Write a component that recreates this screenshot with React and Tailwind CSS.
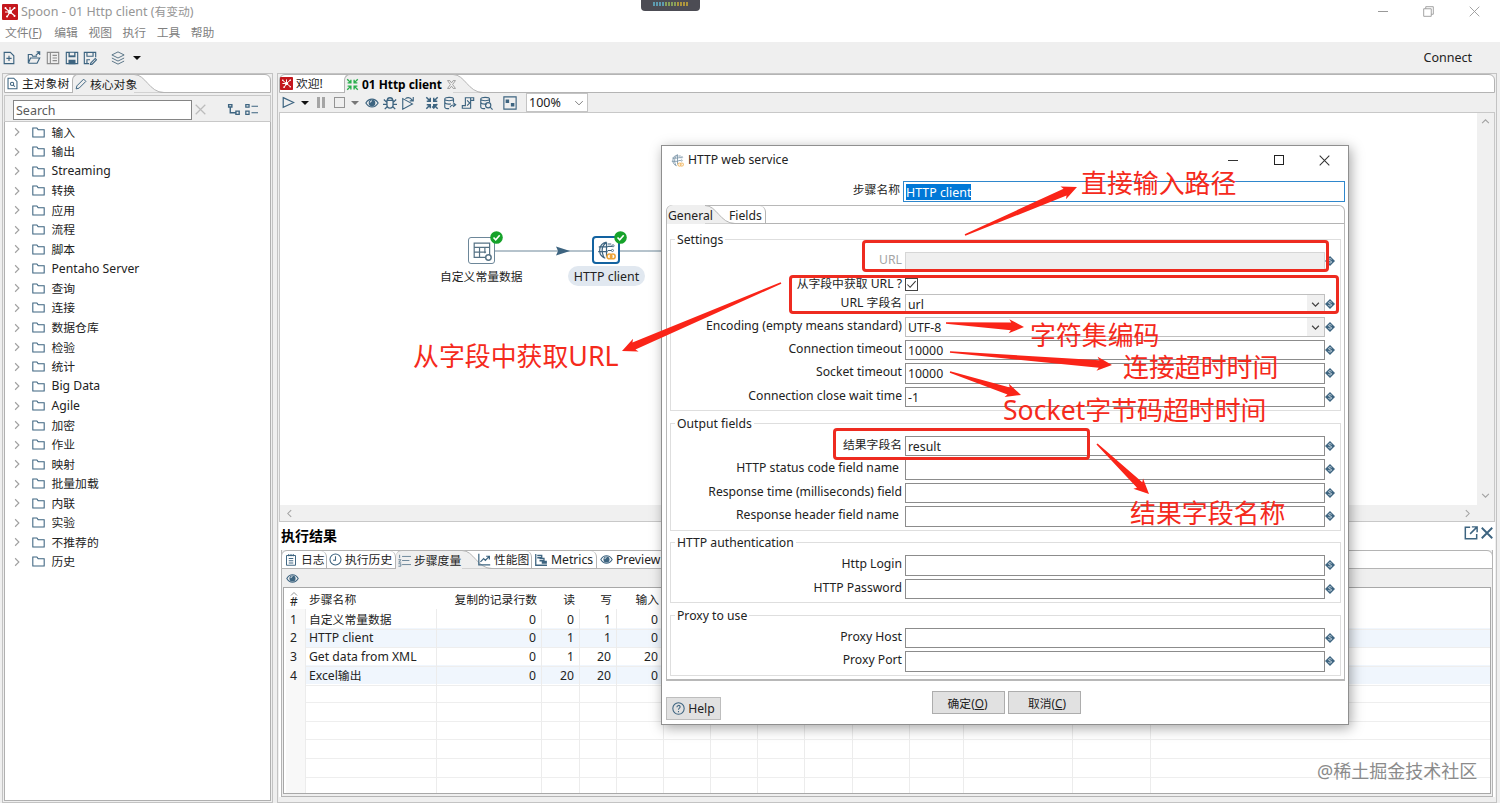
import * as React from "react"
import clsx from "clsx"

const TREE = [
    "输入", "输出", "Streaming", "转换", "应用", "流程", "脚本", "Pentaho Server",
    "查询", "连接", "数据仓库", "检验", "统计", "Big Data", "Agile", "加密",
    "作业", "映射", "批量加载", "内联", "实验", "不推荐的", "历史",
]

const ROWS = [
    ["1", "自定义常量数据", "0", "0", "1", "0"],
    ["2", "HTTP client", "0", "1", "1", "0"],
    ["3", "Get data from XML", "0", "1", "20", "20"],
    ["4", "Excel输出", "0", "20", "20", "0"],
    [], [], [], [], [], [],
]

const COLS = "grid grid-cols-[20px_131px_105px_38px_37px_47px_47px_47px_47px_48px_57px_54px_109px_78px_1fr]"

const ARROWS = [
    [965, 235, 1077, 187],
    [781, 283, 622, 351],
    [946, 323, 1024, 327],
    [950, 352, 1112, 365],
    [950, 372, 1021, 395],
    [1097, 444, 1149, 494],
]

const isLatin = (s) => /^[\x00-\x7f]*$/.test(s)

// Latin and Chinese runs are sized separately so that both sit on the same scale
const Txt = ({ children, className }) => (
    <span className={clsx("whitespace-pre", className)}>
        {children.split(/([\u3000-\u9fff]+)/).filter(Boolean).map((part, i) => (
            <span key={i} className={isLatin(part) ? "text-[12.2px]" : "text-[11.8px]"}>{part}</span>
        ))}
    </span>
)

const Svg = ({ children, size = 15, className, color = "#3d6480" }) => (
    <svg width={size} height={size} viewBox="0 0 16 16" fill="none" stroke={color} strokeWidth="1.3" className={clsx("shrink-0", className)}>
        {children}
    </svg>
)

const Logo = ({ size = 15 }) => (
    <Svg size={size} color="#fff">
        <rect width="16" height="16" rx="1" fill="#c4161c" stroke="none" />
        <path d="M3 4l5 4 5-4.500M8 8l5 4M8 8l-3 5M8 8H3M8 8V3" strokeWidth="1.2" />
        <circle cx="8" cy="8" r="2" fill="#fff" stroke="none" />
        <circle cx="3.500" cy="4" r="1" fill="#fff" stroke="none" />
        <circle cx="12.500" cy="4" r="1" fill="#fff" stroke="none" />
        <circle cx="12.500" cy="12" r="1" fill="#fff" stroke="none" />
        <circle cx="5" cy="12.500" r="1" fill="#fff" stroke="none" />
    </Svg>
)

const Eye = ({ size = 14 }) => (
    <Svg size={size}>
        <path d="M1 8c3.500-6 10.500-6 14 0-3.500 6-10.500 6-14 0z" />
        <circle cx="8" cy="8" r="3.800" fill="#3d6480" stroke="none" />
        <path d="M6 7.500a2 2 0 0 1 2-2" stroke="#fff" strokeWidth="1" />
    </Svg>
)

const Hop = ({ color, size = 14, children }) => (
    <Svg size={size} color={color}>
        <path d="M1.500 1.500L6 6M2 6h4V2M14.500 1.500L10 6M10 2v4h4M1.500 14.500L6 10M2 10h4v4M14.500 14.500L10 10M14 10h-4v4" strokeWidth="1.700" />
        {children}
    </Svg>
)

const Database = () => <path d="M2 3.500C2 1 12 1 12 3.500S2 6 2 3.500v9C2 14 5 14.500 7 14.500M2 7.500c1 1.500 5 1.800 7 1.500M12 3.500V7" />

const Chevron = ({ dir = "right", color = "#a0a0a0", size = 10, width = 1.8 }) => {
    const paths = { right: "M5 2l6 6-6 6", left: "M11 2L5 8l6 6", up: "M2 11l6-6 6 6", down: "M2 5l6 6 6-6" }
    return (
        <Svg size={size} color={color}>
            <path d={paths[dir]} strokeWidth={width} />
        </Svg>
    )
}

const Caret = ({ color = "#111" }) => (
    <svg width="8" height="4" viewBox="0 0 8 4" className="shrink-0">
        <path d="M0 0h8L4 4z" fill={color} />
    </svg>
)

// Slanted right edge of the selected tab
const TabCurve = () => (
    <svg width="30" height="19" viewBox="0 0 30 19" className="shrink-0">
        <path d="M0 0.500C12 0.500 15 18.500 29 18.500H0z" fill="#efefef" />
        <path d="M0 0.500C12 0.500 15 18.500 30 18.500" fill="none" stroke="#b4b4b4" />
    </svg>
)

const TitleBar = () => (
    <div className="relative flex h-[23px] items-center bg-white pl-[2px]">
        <Logo size={16} />
        <span className="ml-[3px] whitespace-pre text-[12.5px] text-[#969696]">Spoon - 01 Http client (<span className="text-[11.8px]">有变动</span>)</span>
        <div className="ml-auto flex w-[122px] items-center justify-between pr-[20px]">
            <div className="h-px w-[10px] bg-[#999]" />
            <Svg size={11} color="#999"><path d="M1 4h11v11H1zM4 4V1h11v11h-3" strokeWidth="1.300" /></Svg>
            <Svg size={11} color="#999"><path d="M1 1l14 14M15 1L1 15" /></Svg>
        </div>
        <div className="absolute left-[641px] top-0 flex h-[11px] w-[59px] justify-center gap-px rounded-b bg-[#4c4c54] pt-[2px]">
            {Array.from({ length: 12 }, (_, i) => (
                <div key={i} className={clsx("h-[4px] w-[2px]", i < 4 ? "bg-[#5d9bb0]" : i < 8 ? "bg-[#87a05b]" : "bg-[#ae963d]")} />
            ))}
        </div>
    </div>
)

const MenuBar = () => (
    <div className="flex h-[19px] items-center gap-[10.5px] bg-white pl-[5px] text-[11.8px] leading-none text-[#808080]">
        <span className="mr-[2px]">文件(<u>F</u>)</span>
        <span>编辑</span>
        <span>视图</span>
        <span>执行</span>
        <span>工具</span>
        <span>帮助</span>
    </div>
)

const Toolbar = () => (
    <div className="flex h-[31px] items-center pl-[2px]">
        <Svg size={14}><path d="M2.500 1.500h7l4 4v9h-11zM8 5.500v6M5 8.500h6" /></Svg>
        <Svg size={14} className="ml-[11px]"><path d="M1.500 14V4h4l1 2h5M1.500 14h10l3-6H4l-2.500 6M10 5l4.500-4M11 1h3.500v3.500" /></Svg>
        <Svg size={14} className="ml-[5px]" color="#8d8d8d"><path d="M1.500 1.500h13v13h-13zM5 1.500v13M7.500 5h5M7.500 8h5M7.500 11h5" /></Svg>
        <Svg size={14} className="ml-[5px]"><path d="M1.500 1.500h13v13h-13z" /><path d="M4 2h8v5H4zM4 10h8v5H4z" fill="#3d6480" stroke="none" /><path d="M5.500 2h5v3h-5z" fill="#efefef" stroke="none" /></Svg>
        <Svg size={14} className="ml-[4px]"><path d="M7 14.500H1.500v-13h13V7M4.500 2v4h7V2M4.500 14v-4H8M9 13.500l5-5 1.500 1.500-5 5-2 .5z" /></Svg>
        <Svg size={14} className="ml-[14px]" color="#557184"><path d="M1 4.500L8 1l7 3.500L8 8zM1 8l7 3.500L15 8M1 11.500L8 15l7-3.500" strokeWidth="1.100" /></Svg>
        <div className="ml-[8px]"><Caret /></div>
        <span className="ml-auto pr-[28px] text-[12.5px]">Connect</span>
    </div>
)

const SidePanel = () => (
    <div className="ml-[2px] flex h-[730px] w-[271px] shrink-0 flex-col border border-[#c3c3c3] bg-[#efefef] px-px pb-px">
        <div className="flex h-[19px] shrink-0 rounded-t-[6px] border border-[#b4b4b4] bg-white">
            <div className="flex w-[67px] items-center gap-[3px] pl-px">
                <Svg size={13}><path d="M2.500 1.500h7l4 4v9h-11z" /><circle cx="7.500" cy="8.500" r="2" /><path d="M9 10l2 2" /></Svg>
                <Txt>主对象树</Txt>
            </div>
            <div className="-mt-px flex h-[19px] w-[62px] items-center gap-[3px] rounded-tl-[6px] border-l border-t border-[#b4b4b4] bg-[#efefef] pl-[2px]">
                <Svg size={12}><path d="M1.500 14.500l1-4 9-9 3 3-9 9z" /></Svg>
                <Txt className="z-10">核心对象</Txt>
            </div>
            <div className="-mt-px"><TabCurve /></div>
        </div>
        <div className="mt-[2px] flex h-[27px] shrink-0 items-center border-x border-b border-t border-[#c8c8c8] pl-[8px] pt-[2px]">
            <div className="flex h-[20px] w-[179px] items-center border border-[#858585] bg-white pl-[2px]"><span className="pt-[2px] text-[12.5px] text-[#5a5a5a]">Search</span></div>
            <Svg size={11} color="#bcbcbc" className="ml-[3px]"><path d="M1 1l14 14M15 1L1 15" strokeWidth="1.800" /></Svg>
            <Svg size={13} className="ml-[21px]"><path d="M2 2h4v3H2zM11 10h4v4h-4zM4 5v7h7" strokeWidth="1.700" /></Svg>
            <Svg size={13} className="ml-[5px]"><path d="M1 2h4v3H1zM1 10h4v4H1zM8 4h8M8 12h8" strokeWidth="1.500" /></Svg>
        </div>
        <div className="grow border-x border-b border-[#b0b0b0] bg-white pt-[0.6px]">
            {TREE.map((name) => (
                <div key={name} className="flex h-[19.53px] items-center pl-[7px]">
                    <Chevron />
                    <Svg size={13} className="ml-[10px]"><path d="M1 2.500h5l1.500 2H15v9H1z" /></Svg>
                    <Txt className="ml-[6.5px]">{name}</Txt>
                </div>
            ))}
        </div>
    </div>
)

const CanvasToolbar = () => (
    <div className="flex h-[19px] shrink-0 items-center pl-[3px]">
        <Svg size={13}><path d="M1.500 2l13 6-13 6z" strokeWidth="1.500" /></Svg>
        <div className="ml-[6px]"><Caret /></div>
        <div className="ml-[8px] h-[11px] w-[3px] bg-[#a5a5a5]" />
        <div className="ml-[2px] h-[11px] w-[3px] bg-[#a5a5a5]" />
        <div className="ml-[9px] h-[11px] w-[11px] border border-[#949494]" />
        <div className="ml-[6px]"><Caret color="#777" /></div>
        <div className="ml-[6px] flex items-center gap-[4px]">
            <Eye size={14} />
            <Svg size={14}><path d="M4.500 5h7v5c0 5-7 5-7 0zM5 5c0-4 6-4 6 0M4 7L1 4M12 7l3-3M4.500 9.500H0M11.500 9.500H16M5 12l-3 3M11 12l3 3" strokeWidth="1.500" /></Svg>
            <Svg size={14}><path d="M2 15V3l11 6zM5 3c3-2 6-1 8 2M10 5.500h4V1" strokeWidth="1.300" /></Svg>
        </div>
        <div className="ml-[10px] flex items-center gap-[4px]">
            <Hop size={14} color="#3d6480"><path d="M8 12l2 2 4-5" /></Hop>
            <Svg size={14}><Database /><path d="M8 13c1-3 3-3 6-3M11.500 7.500l3 2.500-3 2.500" /></Svg>
            <Svg size={14}><path d="M5 2h9.500v3H11v9H1.500v-3H5zM11 5V2M7 11l3-3-3-3" /></Svg>
            <Svg size={14}><Database /><circle cx="10.500" cy="10.500" r="3" /><path d="M12.500 12.500l3 3" /></Svg>
        </div>
        <Svg size={14} className="ml-[10px]"><path d="M1 1h14v14H1z" /><path d="M3 4h4v4H3zM9 8h4v4H9z" fill="#3d6480" stroke="none" /></Svg>
        <div className="ml-[9px] flex h-[19px] w-[62px] items-center justify-between border border-[#c4c4c4] bg-white pl-[2px] pr-[3px]">
            <span className="text-[12.5px]">100%</span>
            <Chevron dir="down" size={10} color="#777" width={1.5} />
        </div>
    </div>
)

const Badge = () => (
    <svg width="13" height="13" viewBox="0 0 13 13" className="absolute -right-[9px] -top-[7px]">
        <circle cx="6.500" cy="6.500" r="6.300" fill="#16a22a" />
        <path d="M3.500 6.500l2.200 2.300 4-4.500" fill="none" stroke="#fff" strokeWidth="1.600" />
    </svg>
)

const Canvas = () => (
    <div className="relative flex h-[410px] shrink-0 flex-col border border-[#c8c8c8] bg-white">
        <div className="flex h-[392px]">
            <div className="grow" />
            <div className="flex w-[17px] flex-col items-center justify-between bg-[#f0f0f0] pb-[5px] pt-[4px]">
                <Chevron dir="up" size={9} />
                <Chevron dir="down" size={9} />
            </div>
        </div>
        <div className="flex grow items-center justify-between bg-[#f0f0f0] pl-[5px] pr-[22px]">
            <Chevron dir="left" size={9} />
            <Chevron size={9} />
        </div>
        <svg width="240" height="12" viewBox="0 0 240 12" className="absolute left-[214px] top-[132px]">
            <path d="M0 6h240" stroke="#6d8799" />
            <path d="M62 1.500L76 6l-14 4.500 2-4.500z" fill="#3d6480" />
        </svg>
        <div className="absolute left-[188px] top-[124px] h-[27px] w-[27px] rounded-[3px] border border-[#6d8799] bg-white p-[4px]">
            <Svg size={19} color="#557184"><path d="M1 1h13v12H1zM1 4.500h13M5.500 4.500v8.500M10 4.500v5M1 8.500h10" strokeWidth="1" /><circle cx="13" cy="13" r="2.300" fill="#fff" strokeWidth="1.200" /></Svg>
            <Badge />
        </div>
        <Txt className="absolute left-[160px] top-[154px]">自定义常量数据</Txt>
        <div className="absolute left-[312px] top-[123px] h-[28px] w-[28px] rounded-[4px] border-2 border-[#1262a0] bg-white p-[3px]">
            <GlobeIcon size={19} />
            <Badge />
        </div>
        <div className="absolute left-[288px] top-[153px] flex h-[20px] w-[77px] items-center justify-center rounded-full bg-[#e1e8f0] pt-[2px] text-[12.4px]">HTTP client</div>
    </div>
)

const GlobeIcon = ({ size }) => (
    <Svg size={size}>
        <path d="M8 1a7 7 0 0 0-1 13.500M8 1v12M8 1C4 4 3.500 9 6 14M1.500 5H9M1 9h8M9 4.500h4M9 2.500h3M9 8h3" strokeWidth="1" />
        <circle cx="13.500" cy="4" r="0.900" strokeWidth="0.700" />
        <circle cx="13" cy="8" r="0.900" strokeWidth="0.700" />
        <g stroke="#eda53a" strokeWidth="1.300"><circle cx="10.500" cy="13" r="2" /><circle cx="13.300" cy="13" r="2" /></g>
    </Svg>
)

const ResultTab = ({ icon, children, className }) => (
    <div className={clsx("flex items-center border-r border-[#b4b4b4]", className)}>
        {icon}
        <Txt>{children}</Txt>
    </div>
)

const Results = () => (
    <div className="flex min-h-0 grow flex-col bg-white">
        <div className="flex h-[28px] shrink-0 items-center justify-between pl-[2px] pr-[2px]">
            <span className="text-[14px] font-bold leading-none text-black">执行结果</span>
            <div className="mb-[6px] flex items-center gap-[3px]">
                <Svg size={14}><path d="M7 1.500H1.500v13h13V9M9 1h6v6M15 1L7 9" strokeWidth="1.700" /></Svg>
                <Svg size={12}><path d="M1 1l14 14M15 1L1 15" strokeWidth="2.500" /></Svg>
            </div>
        </div>
        <div className="ml-[2px] mr-[2px] flex min-h-0 grow flex-col border-x border-b border-[#b4b4b4] bg-[#efefef] pb-[2px]">
            <div className="-mx-px flex h-[19px] shrink-0 rounded-t-[6px] border border-[#b4b4b4] bg-white">
                <ResultTab className="w-[45px] gap-[4px] rounded-tr-[6px] pl-[3px]" icon={<Svg size={12}><path d="M2 2h12v13H2zM5 0v3M8 0v3M11 0v3M5 6h6M5 9h6M5 12h6" /></Svg>}>日志</ResultTab>
                <ResultTab className="w-[69px] gap-[3px] rounded-tr-[6px] pl-[2px]" icon={<Svg size={13}><circle cx="8" cy="8" r="6.800" /><path d="M8 4v5H5" /></Svg>}>执行历史</ResultTab>
                <div className="-mt-px flex h-[19px] w-[66px] items-center gap-[3px] rounded-tl-[6px] border-t border-[#b4b4b4] bg-[#efefef] pl-[2px]">
                    <Svg size={13} color="#6d8799"><path d="M5 3h11M5 8h9M5 13h11M2 1v4M0.500 7h3L1 10h3M0.500 12h3v3h-3" strokeWidth="1.200" /></Svg>
                    <Txt className="z-10">步骤度量</Txt>
                </div>
                <div className="-mt-px w-[16px]"><TabCurve /></div>
                <ResultTab className="z-10 w-[54px] gap-[3px] rounded-tr-[6px]" icon={<Svg size={13}><path d="M1 1v13.500h14M3 11l4-4 2 2 5-5M10 4h4v4" strokeWidth="1.500" /></Svg>}>性能图</ResultTab>
                <ResultTab className="w-[65px] gap-[4px] rounded-tr-[6px] pl-[3px]" icon={<Svg size={12}><path d="M1 0v15h15M3 2h6v3H3M6 6h6v3H6M9 10h6v2H9" strokeWidth="1.700" /></Svg>}>Metrics</ResultTab>
                <ResultTab className="w-[68px] gap-[3px] pl-[3px]" icon={<Eye size={13} />}>Preview</ResultTab>
            </div>
            <div className="flex h-[18px] shrink-0 items-center pl-[4px]"><Eye size={13} /></div>
            <div className="mx-px grow overflow-hidden border border-[#a8a8a8] bg-white pl-[2px]">
                <div className={clsx(COLS, "h-[21px] items-center")}>
                    <div className="flex flex-col items-center pr-[4px]">
                        <Chevron dir="up" size={8} color="#888" />
                        <span className="-mt-[3px] text-[12px] leading-[13px]">#</span>
                    </div>
                    <Txt className="pl-[3px] pt-px">步骤名称</Txt>
                    {["复制的记录行数", "读", "写", "输入"].map((h) => <Txt key={h} className="pr-[5px] pt-px text-right">{h}</Txt>)}
                </div>
                {ROWS.map((row, i) => (
                    <div key={i} className={clsx(COLS, "h-[18.75px]", i < 4 && i % 2 === 1 && "bg-[#f0f6fd]")}>
                        {Array.from({ length: 15 }, (_, c) => (
                            <div
                                key={c}
                                className={clsx(
                                    "flex items-center pt-px",
                                    c < 14 && "border-r border-[#ececec]",
                                    c === 0 && "bg-[#f8f8f8] pl-[4px]",
                                    c === 1 && "pl-[3px]",
                                    c > 1 && "justify-end pr-[5px]",
                                    c > 0 && "border-b border-b-[#eeeeee]"
                                )}
                            >
                                {row[c] && <Txt>{row[c]}</Txt>}
                            </div>
                        ))}
                    </div>
                ))}
            </div>
        </div>
    </div>
)

const MainPanel = () => (
    <div className="ml-[4px] flex h-[730px] w-[1220px] shrink-0 flex-col border border-[#c3c3c3] bg-[#efefef] px-px pb-[5px]">
        <div className="flex h-[19px] shrink-0 rounded-t-[6px] border border-[#b4b4b4] bg-white">
            <div className="flex w-[64px] items-center gap-[3px]">
                <Logo size={13} />
                <Txt>欢迎!</Txt>
            </div>
            <div className="-mt-px flex h-[19px] w-[109px] items-center gap-[3px] rounded-tl-[6px] border-l border-t border-[#b4b4b4] bg-[#efefef] pl-px">
                <Hop size={13} color="#27ae4b" />
                <span className="z-10 whitespace-pre text-[11.9px] font-bold text-black">01 Http client</span>
                <Svg size={9} color="#888" className="z-10 ml-[2px]"><path d="M1 1h4l3 4 3-4h4l-5 7 5 7h-4l-3-4-3 4H1l5-7z" strokeWidth="1.300" /></Svg>
            </div>
            <div className="-mt-px"><TabCurve /></div>
        </div>
        <CanvasToolbar />
        <Canvas />
        <Results />
    </div>
)

const Diamond = () => (
    <svg width="10" height="10" viewBox="0 0 10 10" className="mb-px shrink-0">
        <path d="M5 0l5 5-5 5-5-5z" fill="#3d6480" />
        <path d="M6.600 3.300c-1-1-3.200-.6-3 .6s3 .8 3 2-2.200 1.400-3.200.5" fill="none" stroke="#cfdde6" strokeWidth="1" />
    </svg>
)

const Field = ({ label, value, height = "h-[20px]", select, disabled, inset }) => (
    <div className={clsx("flex items-center", height)}>
        <div className={clsx("-mt-[3px] w-[231px] text-right", inset && "pr-[3px]", disabled && "text-[#a5a5a5]")}><Txt>{label}</Txt></div>
        <div
            className={clsx(
                "ml-[3px] flex h-full w-[420px] items-center justify-between border pl-[2px]",
                disabled ? "border-[#d6d6d6] bg-[#efefef]" : select ? "border-[#c0c0c0] bg-white" : "border-[#8c8c8c] bg-white"
            )}
        >
            <span className="mt-px text-[12.3px]">{value}</span>
            {select && <div className="flex h-full w-[17px] items-center justify-center bg-[#f0f0f0]"><Chevron dir="down" size={9} color="#444" width={2.2} /></div>}
        </div>
        <Diamond />
    </div>
)

const Group = ({ title, className, children }) => (
    <div className={clsx("relative flex flex-col gap-[3px] border border-[#dedede]", className)}>
        <Txt className="absolute -top-[9px] left-[4px] bg-white px-[2px] leading-[18px]">{title}</Txt>
        {children}
    </div>
)

const WebServiceDialog = () => (
    <div className="absolute left-[661px] top-[145px] flex h-[580px] w-[688px] flex-col border border-[#8f8f8f] bg-white shadow-[2px_3px_12px_rgba(0,0,0,0.35)]">
        <div className="flex h-[28px] shrink-0 items-center pl-[9px] pr-[18px]">
            <div className="opacity-70"><GlobeIcon size={13} /></div>
            <Txt className="ml-[4px]">HTTP web service</Txt>
            <div className="ml-auto flex w-[102px] items-center justify-between">
                <div className="h-px w-[10px] bg-[#333]" />
                <div className="h-[10px] w-[10px] border border-[#222]" />
                <Svg size={11} color="#333"><path d="M1 1l14 14M15 1L1 15" strokeWidth="1.500" /></Svg>
            </div>
        </div>
        <div className="mt-[7px] flex h-[21px] shrink-0">
            <Txt className="-mt-px w-[238px] text-right">步骤名称</Txt>
            <div className="ml-[3px] flex w-[442px] items-center border border-[#2f87cc] pl-[2px]">
                <span className="h-[16px] bg-[#0078d7] text-[12.4px] leading-[17px] text-white">HTTP client</span>
            </div>
        </div>
        <div className="ml-[4px] mt-[3px] flex h-[476px] w-[679px] shrink-0 flex-col rounded-t-[6px] border border-b-2 border-[#b8b8b8]">
            <div className="flex h-[18px] shrink-0 border-b border-[#b4b4b4]">
                <div className="-mt-px flex h-[19px] w-[38px] items-center rounded-tl-[6px] bg-[#efefef] pl-px pt-[2px]"><Txt className="z-10">General</Txt></div>
                <div className="-mt-px w-[24px]"><TabCurve /></div>
                <div className="flex w-[37px] items-center rounded-tr-[6px] border-r border-[#b4b4b4] pt-[2px]"><Txt className="z-10">Fields</Txt></div>
            </div>
            <div className="mx-[3px] flex grow flex-col">
                <Group title="Settings" className="mt-[15px] h-[172px] pt-[12px]">
                    <Field label="URL" disabled height="h-[19px]" />
                    <div className="mt-[3px] flex h-[14px] items-center">
                        <Txt className="mt-px w-[231px] text-right leading-none">从字段中获取 URL ?</Txt>
                        <div className="ml-[3px] flex h-[13px] w-[13px] items-center justify-center border border-[#444]">
                            <Svg size={11} color="#333"><path d="M2 8l4 4 8-9" strokeWidth="1.500" /></Svg>
                        </div>
                    </div>
                    <Field label="URL 字段名" value="url" select />
                    <Field label="Encoding (empty means standard)" value="UTF-8" select />
                    <Field label="Connection timeout" value="10000" />
                    <Field label="Socket timeout" value="10000" height="h-[21px]" />
                    <Field label="Connection close wait time" value="-1" />
                </Group>
                <Group title="Output fields" className="mt-[12px] h-[108px] pt-[12px]">
                    <Field label="结果字段名" value="result" />
                    <Field label="HTTP status code field name" inset height="h-[21px]" />
                    <Field label="Response time (milliseconds) field" />
                    <Field label="Response header field name" inset height="h-[21px]" />
                </Group>
                <Group title="HTTP authentication" className="mt-[11px] h-[61px] pt-[12px]">
                    <Field label="Http Login" height="h-[21px]" />
                    <Field label="HTTP Password" />
                </Group>
                <Group title="Proxy to use" className="mt-[12px] h-[61px] pt-[12px]">
                    <Field label="Proxy Host" />
                    <Field label="Proxy Port" height="h-[21px]" />
                </Group>
            </div>
        </div>
        <div className="flex grow pl-[4px] pt-[10px]">
            <div className="mt-[6px] flex h-[23px] w-[55px] items-center justify-center gap-[3px] border border-[#bdbdbd] bg-[#e1e1e1]">
                <Svg size={13}><circle cx="8" cy="8" r="7" /><path d="M6 6.500c0-3 4-3 4-.5 0 1.500-2 1.500-2 3.500M8 11v1.500" /></Svg>
                <Txt className="pt-px">Help</Txt>
            </div>
            <div className="ml-[211px] flex h-[23px] w-[73px] items-center justify-center border border-[#adadad] bg-[#e1e1e1] pr-[2px] text-[11.8px]">确定(<u>O</u>)</div>
            <div className="ml-[3px] flex h-[23px] w-[73px] items-center justify-center border border-[#adadad] bg-[#e1e1e1] pl-[5px] text-[11.8px]">取消(<u>C</u>)</div>
        </div>
    </div>
)

const arrowPoints = ([x1, y1, x2, y2]) => {
    const len = Math.hypot(x2 - x1, y2 - y1)
    const ux = (x2 - x1) / len
    const uy = (y2 - y1) / len
    const at = (back, side) => `${x2 - ux * back - uy * side},${y2 - uy * back + ux * side}`
    return [at(len, 0.8), at(13, 3.8), at(15, 7), at(0, 0), at(15, -7), at(13, -3.8), at(len, -0.8)].join(" ")
}

const Annotations = () => (
    <div className="absolute inset-0 text-[25.9px] leading-[30px] text-[#f52a1c]">
        <svg width="1500" height="803" viewBox="0 0 1500 803" className="absolute inset-0">
            {ARROWS.map((a, i) => <polygon key={i} points={arrowPoints(a)} fill="#fa2418" />)}
        </svg>
        <div className="absolute left-[862px] top-[240px] h-[32px] w-[467px] rounded-[4px] border-[3px] border-[#ee2b20]" />
        <div className="absolute left-[789px] top-[275px] h-[39px] w-[550px] rounded-[4px] border-[3px] border-[#ee2b20]" />
        <div className="absolute left-[833px] top-[428px] h-[32px] w-[257px] rounded-[4px] border-[3px] border-[#ee2b20]" />
        <span className="absolute left-[1081px] top-[168px] whitespace-nowrap">直接输入路径</span>
        <span className="absolute left-[413px] top-[341px] whitespace-nowrap">从字段中获取<span className="text-[26.8px]">URL</span></span>
        <span className="absolute left-[1030px] top-[320px] whitespace-nowrap">字符集编码</span>
        <span className="absolute left-[1123px] top-[352px] whitespace-nowrap">连接超时时间</span>
        <span className="absolute left-[1003px] top-[395px] whitespace-nowrap"><span className="text-[26.6px]">Socket</span>字节码超时时间</span>
        <span className="absolute left-[1130px] top-[498px] whitespace-nowrap">结果字段名称</span>
    </div>
)

export default function App() {
    return (
        <div className="relative h-[803px] w-[1500px] overflow-hidden bg-[#efefef] font-['Noto_Sans','Noto_Sans_CJK_SC',sans-serif] text-[12.2px] leading-[18px] text-[#222]">
            <TitleBar />
            <MenuBar />
            <Toolbar />
            <div className="flex">
                <SidePanel />
                <MainPanel />
            </div>
            <WebServiceDialog />
            <Annotations />
            <span className="absolute left-[1317px] top-[760px] whitespace-nowrap text-[18px] leading-[22px] text-[#8b8b8b]">@稀土掘金技术社区</span>
        </div>
    )
}
